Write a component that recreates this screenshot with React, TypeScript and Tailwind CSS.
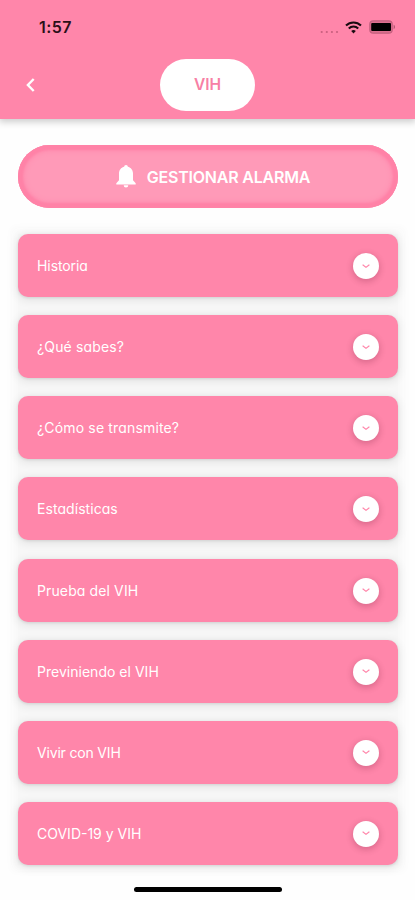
const topics = [
  { label: 'Historia', spacing: 'tracking-[-0.08px]' },
  { label: '¿Qué sabes?', spacing: 'tracking-[0.15px]' },
  { label: '¿Cómo se transmite?', spacing: 'tracking-[0.16px]' },
  { label: 'Estadísticas', spacing: 'tracking-[0.06px]' },
  { label: 'Prueba del VIH', spacing: 'tracking-[0.12px]' },
  { label: 'Previniendo el VIH', spacing: 'tracking-[0.02px]' },
  { label: 'Vivir con VIH', spacing: 'tracking-[-0.18px]' },
  { label: 'COVID-19 y VIH', spacing: 'tracking-[0px]' },
];

function StatusBar() {
  return (
    <div className="flex h-[54px] items-center justify-between pr-[19px] pl-[39px] text-[#2a1018]">
      <span className="text-[16px] leading-none font-semibold tracking-[0.4px]">1:57</span>
      <div className="flex items-center">
        <svg width="19" height="4" viewBox="0 0 19 4" className="mt-[9px] mr-[6px]" fill="#c9607f">
          <circle cx="1.7" cy="2" r="1.1" />
          <circle cx="6.8" cy="2" r="1.1" />
          <circle cx="11.9" cy="2" r="1.1" />
          <circle cx="17" cy="2" r="1.1" />
        </svg>
        <svg width="17" height="13" viewBox="0 0 17 13" className="mr-[7px]" fill="none" stroke="#190b10" strokeWidth="2.1">
          <path d="M1 4.5C5.2 .4 11.8 .4 16 4.5" />
          <path d="M3.8 7.5C6.4 4.9 10.6 4.9 13.2 7.5" />
          <path d="M6.2 10C7.5 8.8 9.5 8.8 10.8 10L8.5 12.4Z" fill="#190b10" stroke="none" />
        </svg>
        <svg width="27" height="14" viewBox="0 0 27 14">
          <rect x=".8" y=".8" width="22.4" height="12.4" rx="3.5" fill="#dc7090" stroke="#c4607f" strokeWidth="1.2" />
          <rect x="2.2" y="3" width="19.8" height="8" rx="1" fill="#000" />
          <path d="M24.6 4.8C26.5 5.5 26.5 8.5 24.6 9.2Z" fill="#b45674" />
        </svg>
      </div>
    </div>
  );
}

function Topic({ label, spacing }: { label: string; spacing: string }) {
  return (
    <button className="flex h-[63px] w-full shrink-0 items-center justify-between rounded-[10px] bg-[#ff86aa] pt-px pr-[19px] pl-[19px] text-white shadow-[0_2px_9px_2px_rgba(0,0,0,0.07),0_1px_3px_rgba(0,0,0,0.1)]">
      <span className={`text-[14px] leading-5 whitespace-nowrap ${spacing}`}>{label}</span>
      <span className="flex size-[26px] items-center justify-center rounded-full bg-white shadow-[0_2px_6px_1px_rgba(80,0,30,0.2)]">
        <svg width="8" height="5" viewBox="0 0 8 5" fill="none" stroke="#ff86aa" strokeWidth="1.2" strokeLinecap="round" strokeLinejoin="round">
          <path d="M1 1L4 3.4L7 1" />
        </svg>
      </span>
    </button>
  );
}

export default function App() {
  return (
    <div
      className="flex h-[900px] w-[415px] flex-col overflow-hidden bg-[#fefefe]"
      style={{ fontFamily: 'Inter, "Liberation Sans", sans-serif', fontFeatureSettings: '"cv11"' }}
    >
      <header className="h-[118.5px] shrink-0 bg-[#ff86aa] shadow-[0_2px_7px_1px_rgba(0,0,0,0.2)]">
        <StatusBar />
        <div className="grid grid-cols-[1fr_95px_1fr] items-center pt-[4.5px]">
          <button className="ml-[26px] w-fit" aria-label="Volver">
            <svg width="9" height="14" viewBox="0 0 9 14" fill="none" stroke="#fff" strokeWidth="2.4">
              <path d="M7.7 1L1.9 7L7.7 13" />
            </svg>
          </button>
          <h1 className="flex h-[52px] items-center justify-center rounded-full bg-white text-[15.5px] font-semibold text-[#f780a5]">VIH</h1>
          <span />
        </div>
      </header>
      <main className="flex h-[758.5px] shrink-0 flex-col overflow-hidden px-[18px] pt-[26.5px]">
        <button className="flex h-[63px] w-[380px] shrink-0 items-center justify-center rounded-full bg-[#ff9ab8] pl-[10px] text-white shadow-[inset_0_0_2px_5px_#ff82a7,inset_0_0_4px_7px_#ff8fb1]">
          <svg width="20" height="23" viewBox="0 0 20 23" className="mr-[11px]" fill="#fff">
            <path d="M10 0C8.9 0 8.2.8 8.2 1.8C5 2.5 3 5.2 3 8.6V15.2L.3 18.2V19.4H19.7V18.2L17 15.2V8.6C17 5.2 15 2.5 11.8 1.8C11.8.8 11.1 0 10 0ZM7.7 20.2A2.3 2.3 0 0 0 12.3 20.2Z" />
          </svg>
          <span className="text-[16px] font-semibold tracking-[-0.2px] whitespace-nowrap">GESTIONAR ALARMA</span>
        </button>
        <div className="mt-[26.2px] flex w-[380px] shrink-0 flex-col gap-[18.1px] bg-[#f7f7f7] shadow-[0_0_8px_6px_#f9f9f9]">
          {topics.map((topic) => (
            <Topic key={topic.label} {...topic} />
          ))}
        </div>
      </main>
      <footer className="flex h-[23px] justify-center pt-[10px]">
        <div className="h-[5px] w-[148px] rounded-full bg-black" />
      </footer>
    </div>
  );
}
